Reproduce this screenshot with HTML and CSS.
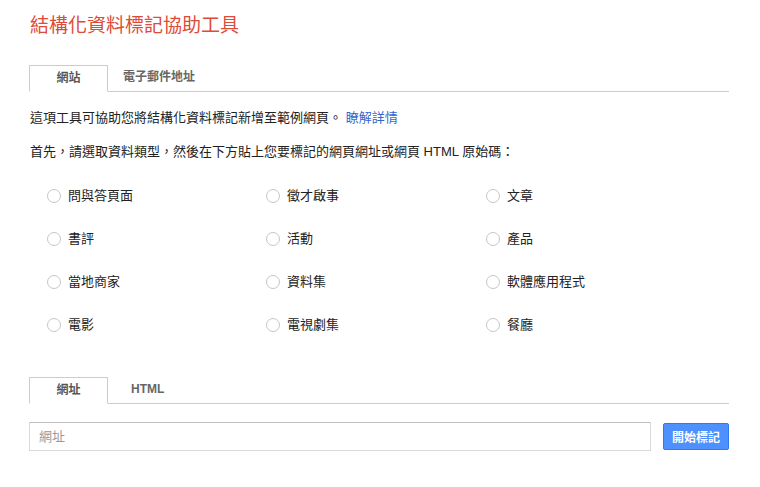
FILE: index.html
```html
<!DOCTYPE html>
<html lang="zh-Hant">
<head>
<meta charset="utf-8">
<title>結構化資料標記協助工具</title>
<link rel="stylesheet" href="styles.css">
</head>
<body>
<div class="page">
  <h1 class="title">結構化資料標記協助工具</h1>

  <div class="tabs tabs-top">
    <div class="tab active">網站</div>
    <div class="tab">電子郵件地址</div>
  </div>

  <p class="intro">這項工具可協助您將結構化資料標記新增至範例網頁。 <a class="link" href="#">瞭解詳情</a></p>
  <p class="prompt">首先，請選取資料類型，然後在下方貼上您要標記的網頁網址或網頁 HTML 原始碼：</p>

  <div class="types">
    <label class="type"><span class="radio"></span><span class="label">問與答頁面</span></label>
    <label class="type"><span class="radio"></span><span class="label">徵才啟事</span></label>
    <label class="type"><span class="radio"></span><span class="label">文章</span></label>
    <label class="type"><span class="radio"></span><span class="label">書評</span></label>
    <label class="type"><span class="radio"></span><span class="label">活動</span></label>
    <label class="type"><span class="radio"></span><span class="label">產品</span></label>
    <label class="type"><span class="radio"></span><span class="label">當地商家</span></label>
    <label class="type"><span class="radio"></span><span class="label">資料集</span></label>
    <label class="type"><span class="radio"></span><span class="label">軟體應用程式</span></label>
    <label class="type"><span class="radio"></span><span class="label">電影</span></label>
    <label class="type"><span class="radio"></span><span class="label">電視劇集</span></label>
    <label class="type"><span class="radio"></span><span class="label">餐廳</span></label>
  </div>

  <div class="tabs tabs-bottom">
    <div class="tab active">網址</div>
    <div class="tab tab-html">HTML</div>
  </div>

  <div class="url-row">
    <div class="url-input">網址</div>
    <button class="start-btn">開始標記</button>
  </div>
</div>
</body>
</html>
```

FILE: styles.css
```css
html, body {
  margin: 0;
  padding: 0;
  background: #fff;
}
body {
  font-family: "Liberation Sans", "Noto Sans CJK TC", sans-serif;
  color: #222;
  font-size: 13px;
}
.page {
  width: 700px;
  padding-left: 29px;
}
.title {
  margin: 0;
  padding-top: 13px;
  height: 26px;
  line-height: 26px;
  font-size: 19px;
  font-weight: normal;
  color: #dd4b39;
  padding-left: 1px;
}
.tabs {
  display: flex;
  border-bottom: 1px solid #ccc;
  height: 26px;
}
.tabs-top {
  margin-top: 26px;
}
.tab {
  height: 26px;
  line-height: 25px;
  font-size: 12px;
  font-weight: bold;
  color: #666;
  padding: 0 15px;
  box-sizing: border-box;
}
.tab.active {
  width: 79px;
  text-align: center;
  padding: 0;
  border: 1px solid #ccc;
  border-bottom: 1px solid #fff;
  height: 27px;
  background: #fff;
  color: #555;
}
.tab-html {
  padding-left: 23px;
}
.intro {
  margin: 17px 0 0 1px;
  line-height: 18px;
}
.link {
  color: #3366cc;
  text-decoration: none;
}
.prompt {
  margin: 16px 0 0 1px;
  line-height: 18px;
}
.types {
  display: grid;
  grid-template-columns: 219px 220px 220px;
  grid-auto-rows: 43px;
  padding-left: 18px;
  margin-top: 13px;
}
.type {
  display: flex;
  align-items: center;
  gap: 7px;
}
.radio {
  width: 14px;
  height: 14px;
  box-sizing: border-box;
  border: 1px solid #c6c6c6;
  border-radius: 50%;
  background: #fff;
  flex: none;
}
.label {
  line-height: 18px;
  color: #222;
}
.tabs-bottom {
  margin-top: 31px;
}
.url-row {
  display: flex;
  align-items: center;
  gap: 12px;
  margin-top: 18px;
}
.url-input {
  width: 623px;
  height: 29px;
  box-sizing: border-box;
  border: 1px solid #d9d9d9;
  border-top-color: #c0c0c0;
  padding-left: 9px;
  line-height: 27px;
  color: #999;
  font-size: 13px;
}
.start-btn {
  width: 66px;
  height: 27px;
  box-sizing: border-box;
  border: 1px solid #3079ed;
  border-radius: 2px;
  background: #4d90fe;
  color: #fff;
  font-family: "Liberation Sans", "Noto Sans CJK TC", sans-serif;
  font-size: 12px;
  font-weight: bold;
  padding: 0;
}
```
